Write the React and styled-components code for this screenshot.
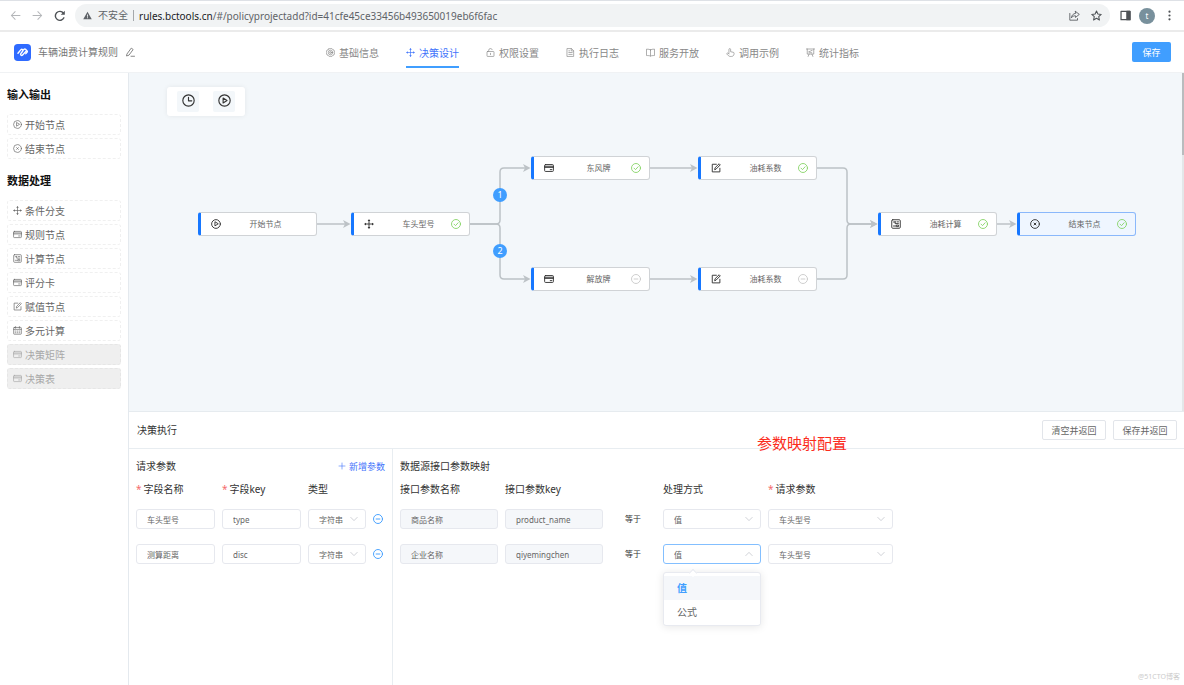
import React from "react";
import styled, { createGlobalStyle, css } from "styled-components";

const GlobalStyle = createGlobalStyle`
  * { box-sizing: border-box; }
  html, body { margin: 0; padding: 0; }
  body, button, input, select {
    font-family: "Noto Sans", "Noto Sans CJK SC", sans-serif;
  }
  body { background: #fff; color: #333; font-size: 10px; line-height: 16px; }
  button { margin: 0; padding: 0; border: 0; background: none; cursor: pointer; }
  h1, h2, h3, p, ul { margin: 0; padding: 0; font-weight: 400; }
`;

/* ---------- icons ---------- */

const Svg = styled.svg`
  display: block;
  flex: none;
  width: ${(p) => p.$size}px;
  height: ${(p) => p.$size}px;
  fill: none;
  stroke: currentColor;
  stroke-width: ${(p) => p.$weight || 1.2};
  stroke-linecap: round;
  stroke-linejoin: round;
`;

const shapes = {
  play: (
    <>
      <circle cx="8" cy="8" r="7" />
      <path d="M6.3 5v6l4.8-3z" />
    </>
  ),
  end: (
    <>
      <circle cx="8" cy="8" r="7" />
      <path d="M6.4 6.4l3.2 3.2M9.6 6.4L6.4 9.6" />
    </>
  ),
  branch: (
    <>
      <path d="M8 2v12M2 8h12" />
      <path d="M8 .2l2.200 3H5.800zM8 15.800l2.200-3H5.800zM.2 8l3-2.200v4.400zM15.800 8l-3-2.200v4.400z" fill="currentColor" stroke="none" />
    </>
  ),
  card: (
    <>
      <rect x="1" y="2.5" width="14" height="11" rx="1.4" />
      <path d="M1 5.2h14M1 7h14M10 10.6h2.6" />
    </>
  ),
  calc: (
    <>
      <rect x="1.2" y="1.2" width="13.6" height="13.6" rx="1.6" />
      <path d="M4 4.800h2.600M6.600 4v3.400h5.200M9.600 4.600h2.400M4 11.200h3.600M9.200 9.800h2.800v2.400H9.200z" />
    </>
  ),
  edit: (
    <>
      <path d="M8.600 2H2v12.200h12.200V8.400" />
      <path d="M6 10.200l.5-2.600L13 1.200l1.800 1.800-6.500 6.600z" />
    </>
  ),
  calendar: (
    <>
      <rect x="1.2" y="2.6" width="13.6" height="12" rx="1" />
      <path d="M1.2 6h13.6M4.6 1v3M11.4 1v3M4 9h1M7.5 9h1M11 9h1M4 12h1M7.5 12h1M11 12h1" />
    </>
  ),
  clock: (
    <>
      <circle cx="8" cy="8" r="7" />
      <path d="M8 4v4.4h4" />
    </>
  ),
  check: (
    <>
      <circle cx="8" cy="8" r="7.2" />
      <path d="M4.8 8.2l2.4 2.4 4.2-4.6" />
    </>
  ),
  minus: (
    <>
      <circle cx="8" cy="8" r="7.2" />
      <path d="M5 8h6" />
    </>
  ),
  gear: (
    <>
      <path d="M5.200 1.200h5.600L12 3l2.200.6L15.400 8l-1.200 4.400-2.200.6-1.200 1.800H5.200L4 13l-2.200-.6L.6 8l1.200-4.400L4 3z" />
      <circle cx="8" cy="8" r="4" />
      <circle cx="8" cy="8" r="1.6" />
    </>
  ),
  lock: (
    <>
      <rect x="1.8" y="6.2" width="12.4" height="8.8" rx="1" />
      <path d="M4.8 6V4a3.2 3.2 0 0 1 6.2-1M8 9.4v2.4" />
    </>
  ),
  doc: (
    <>
      <path d="M2.4 1h7.4l3.8 3.8V15H2.4z" />
      <path d="M9.4 1.2v4h4M5 8h6M5 11.4h6M5 5h1.6" />
    </>
  ),
  book: <path d="M8 3.2v11M8 3.2C6.8 2.4 4 2 .9 2v11.4c3 0 5.7.2 7.1 1 1.4-.8 4-1 7.1-1V2C12 2 9.2 2.4 8 3.2z" />,
  pointer: (
    <path d="M5.2 9.6V2.6a1.5 1.5 0 0 1 3 0v4l4.6 1a2 2 0 0 1 1.6 2.2c-.3 3-1.4 5.2-4.8 5.2H7.4C5 15 3.8 13 1.400 10.600c-.6-1.400 1.400-2 2.200-1.400l1.600 1.400" />
  ),
  board: (
    <path d="M.8 1.800h14.400M2.200 1.800v9h11.600v-9M5.400 11l-1.600 4M10.600 11l1.600 4M5.200 6.200h2.400l1-1.600h2.200M5.200 8.400h5" />
  ),
  pen: (
    <path d="M3.400 10.800L10 1.800l3 2.200-6.600 9-3.400 1.200zM9.600 14.800h5.600" />
  ),
  plus: <path d="M8 2v12M2 8h12" />,
  down: <path d="M1.600 4.800L8 11.200l6.400-6.400" />,
  up: <path d="M1.600 11.200L8 4.800l6.400 6.400" />,
  back: <path d="M14.500 8H2M7.500 2.500L2 8l5.500 5.500" />,
  forward: <path d="M1.500 8H14M8.500 2.500L14 8l-5.500 5.500" />,
  reload: (
    <>
      <path d="M13.2 10.4A6 6 0 1 1 12.6 4.2" />
      <path d="M14.4 1v5.4H9z" fill="currentColor" stroke="none" />
    </>
  ),
  warn: <path d="M8 1.2L15.6 14.6H.4zM7.2 6v4h1.6V6zm0 5.2v1.6h1.6v-1.6z" fill="currentColor" fillRule="evenodd" stroke="none" />,
  share: (
    <>
      <path d="M1.2 5v9.8h11.2v-2.4" />
      <path d="M9.400 2l5.600 4.400-5.600 4.400V8.400c-2.600 0-4.400.8-6 3 .4-3.400 2.400-6 6-6.600z" />
    </>
  ),
  star: <path d="M8 1.400l2 4.500 4.900.5-3.700 3.300 1.100 4.900L8 12.100l-4.300 2.500 1.100-4.900L1.100 6.400 6 5.900z" />,
  sidePanel: (
    <>
      <rect x="1.5" y="2" width="13" height="12" />
      <path d="M10 2h4.5v12H10z" fill="currentColor" />
    </>
  ),
  more: (
    <g fill="currentColor" stroke="none">
      <circle cx="8" cy="2.5" r="1.6" />
      <circle cx="8" cy="8" r="1.6" />
      <circle cx="8" cy="13.5" r="1.6" />
    </g>
  ),
};

const Icon = ({ name, size = 10, weight }) => (
  <Svg viewBox="0 0 16 16" $size={size} $weight={weight} aria-hidden="true">
    {shapes[name]}
  </Svg>
);

/* ---------- browser bar ---------- */

const Page = styled.div`
  display: flex;
  flex-direction: column;
  min-height: 100vh;
`;

const BrowserBar = styled.div`
  display: flex;
  align-items: center;
  height: 32px;
  padding: 0 8px 0 10px;
  border-top: 1px solid #dee1e6;
  border-bottom: 2px solid #ebebeb;
  color: #5f6368;
`;

const BarButton = styled.button`
  display: flex;
  justify-content: center;
  width: ${(p) => p.$width || 22}px;
  color: ${(p) => (p.$dim ? "#b4b6b9" : "#4f5357")};
`;

const AddressBar = styled.div`
  display: flex;
  flex: 1;
  align-items: center;
  height: 23px;
  margin: 0 4px 0 10px;
  padding: 0 3px 0 8px;
  border-radius: 12px;
  background: #f1f3f4;
`;

const Insecure = styled.span`
  margin-left: 6px;
  padding-right: 5px;
  border-right: 1px solid #a5a8ab;
  line-height: 11px;
`;

const Url = styled.p`
  flex: 1;
  margin-left: 5px;
  color: #5f6368;
  b { color: #202124; font-weight: 400; }
`;

const Avatar = styled.span`
  width: 16px;
  height: 16px;
  margin: 0 7px 0 3px;
  border-radius: 50%;
  background: #78909c;
  color: #fff;
  font-size: 8px;
  line-height: 15px;
  text-align: center;
`;

/* ---------- application header ---------- */

const Header = styled.header`
  display: grid;
  grid-template-columns: 1fr auto 1fr;
  align-items: center;
  height: 41px;
  padding: 0 13px 0 14px;
  border-bottom: 1px solid #f0f2f4;
`;

const Brand = styled.div`
  display: flex;
  align-items: center;
  gap: 7px;
  color: #777;
`;

const Logo = styled.svg`
  width: 17px;
  height: 17px;
`;

const BrandName = styled.h1`
  font-size: 10px;
  line-height: 16px;
`;

const IconButton = styled.button`
  display: flex;
  color: ${(p) => p.$color || "#777"};
`;

const Nav = styled.nav`
  display: flex;
  gap: 27px;
  height: 32px;
`;

const Tab = styled.a`
  display: flex;
  align-items: center;
  gap: 4px;
  padding-top: 3px;
  border-bottom: 2px solid ${(p) => (p.$active ? "#409eff" : "transparent")};
  color: ${(p) => (p.$active ? "#3f74fb" : "#888")};
  text-decoration: none;
`;

const SaveButton = styled.button`
  justify-self: end;
  width: 39px;
  height: 20px;
  border-radius: 2px;
  background: #409eff;
  color: #fff;
  font-size: 9px;
`;

/* ---------- body ---------- */

const Body = styled.div`
  display: flex;
  flex: 1;
`;

const Sidebar = styled.aside`
  flex: none;
  width: 129px;
  padding: 14px 7px;
  border-right: 1px solid #e4e9ee;
`;

const GroupTitle = styled.h2`
  margin-bottom: 11px;
  color: #111;
  font-size: 11px;
  font-weight: 700;
`;

const Palette = styled.ul`
  display: flex;
  flex-direction: column;
  gap: 3px;
  margin-bottom: 14px;
  list-style: none;
`;

const PaletteItem = styled.li`
  display: flex;
  align-items: center;
  gap: 3px;
  height: 21px;
  padding: 0 5px;
  border: 1px dashed #f0f0f0;
  border-radius: 3px;
  color: #666;
  ${(p) =>
    p.$disabled &&
    css`
      border-color: #e6e6e6;
      background: #efefef;
      color: #a8a8a8;
    `}
`;

const Main = styled.main`
  display: flex;
  flex: 1;
  flex-direction: column;
  min-width: 0;
`;

const Canvas = styled.section`
  position: relative;
  height: 338px;
  background: #f3f7fa;
`;

const ScrollThumb = styled.div`
  position: absolute;
  top: 0;
  right: 0;
  width: 2px;
  height: 100%;
  background: linear-gradient(#b9bcbe 82px, #e4e7e9 82px);
`;

const Toolbox = styled.div`
  position: absolute;
  top: 14px;
  left: 38px;
  display: flex;
  gap: 14px;
  padding: 4px 10px;
  border-radius: 3px;
  background: #fff;
  box-shadow: 0 0 5px rgba(0, 0, 0, 0.07);
`;

const Tool = styled.button`
  display: flex;
  justify-content: center;
  width: 22px;
  height: 21px;
  padding-top: 3px;
  border-radius: 2px;
  background: #f3f7fa;
  color: #333;
`;

const Edges = styled.svg`
  position: absolute;
  top: 0;
  left: 0;
  width: 100%;
  height: 100%;
  fill: none;
  stroke: #bcc2c6;
  stroke-width: 1.5;
`;

const NodeBox = styled.div`
  position: absolute;
  top: ${(p) => p.$y}px;
  left: ${(p) => p.$x}px;
  display: grid;
  grid-template-columns: 10px 1fr 10px;
  align-items: center;
  width: 119px;
  height: 24px;
  padding: 0 8px 0 10px;
  border: 1px solid ${(p) => (p.$selected ? "#8ab8fb" : "#d0d3d6")};
  border-left: 3px solid #1677ff;
  border-radius: 3px;
  background: ${(p) => (p.$selected ? "#eff6ff" : "#fff")};
  color: #333;
`;

const NodeLabel = styled.span`
  padding-left: 12px;
  color: #666;
  font-size: 8px;
  text-align: center;
`;

const Status = styled.span`
  color: ${(p) => (p.$ok ? "#85d465" : "#c8c8c8")};
`;

const Order = styled.span`
  position: absolute;
  top: ${(p) => p.$y}px;
  left: 364px;
  width: 14px;
  height: 14px;
  border-radius: 50%;
  background: #409eff;
  color: #fff;
  font-size: 9px;
  line-height: 14px;
  text-align: center;
`;

/* ---------- settings panel ---------- */

const Panel = styled.section`
  position: relative;
  display: flex;
  flex: 1;
  flex-direction: column;
  border-top: 1px solid #e6ebef;
`;

const PanelHead = styled.div`
  display: flex;
  align-items: center;
  gap: 7px;
  height: 37px;
  padding: 0 7px 0 8px;
  border-bottom: 1px solid #e8edf1;
`;

const PanelTitle = styled.h2`
  flex: 1;
  font-size: 10px;
`;

const PlainButton = styled.button`
  width: 64px;
  height: 20px;
  border: 1px solid #e2e5ea;
  border-radius: 2px;
  color: #666;
  font-size: 9px;
`;

const Note = styled.p`
  position: absolute;
  top: 19px;
  left: 628px;
  color: #fb2c1c;
  font-size: 15px;
  line-height: 24px;
`;

const Columns = styled.div`
  display: flex;
  flex: 1;
`;

const Column = styled.div`
  flex: ${(p) => (p.$grow ? "1" : "none")};
  width: ${(p) => (p.$grow ? "auto" : "264px")};
  padding: 9px 7px;
  border-right: ${(p) => (p.$grow ? "0" : "1px solid #e8edf1")};
`;

const ColumnHead = styled.div`
  display: flex;
  align-items: center;
  justify-content: space-between;
  height: 16px;
  margin-bottom: 7px;
`;

const ColumnTitle = styled.h3`
  font-size: 10px;
`;

const AddButton = styled.button`
  display: flex;
  align-items: center;
  gap: 3px;
  color: #3f74fb;
  font-size: 9px;
`;

const Row = styled.div`
  display: grid;
  grid-template-columns: ${(p) => (p.$mapping ? "98px 98px 46px 98px 125px" : "79px 79px 58px 10px")};
  align-items: center;
  column-gap: 7px;
  margin-bottom: ${(p) => (p.$head ? 12 : 15)}px;
`;

const FieldLabel = styled.span`
  grid-column: ${(p) => p.$col || "auto"};
  white-space: nowrap;
  ${(p) =>
    p.$required &&
    css`
      &::before {
        content: "*";
        margin-right: 2px;
        color: #f56c6c;
      }
    `}
`;

const control = css`
  width: 100%;
  height: 20px;
  padding: 0 10px;
  border: 1px solid ${(p) => (p.$open ? "#83bfff" : "#e6e8ee")};
  border-radius: 3px;
  background: #fff;
  color: #666;
  font-size: 8px;
  outline: 0;
`;

const TextInput = styled.input`
  ${control}
  &:disabled { background: #f5f7fa; }
`;

const SelectWrap = styled.div`
  position: relative;
  display: grid;
  align-items: center;
  justify-items: end;
  > * { grid-area: 1 / 1; }
  > svg { margin-right: 8px; color: #b0b4bc; pointer-events: none; }
`;

const NativeSelect = styled.select`
  ${control}
  appearance: none;
`;

const Equals = styled.span`
  font-size: 8px;
  text-align: center;
`;

const Menu = styled.div`
  position: absolute;
  z-index: 2;
  top: 28px;
  left: 0;
  width: 100%;
  padding: 3px 0 1px;
  border: 1px solid #e8eaf0;
  border-radius: 3px;
  background: #fff;
  box-shadow: 0 1px 8px rgba(0, 0, 0, 0.1);
  &::before {
    content: "";
    position: absolute;
    top: -3px;
    left: 26px;
    width: 5px;
    height: 5px;
    border: solid #e8eaf0;
    border-width: 1px 0 0 1px;
    background: #fff;
    transform: rotate(45deg);
  }
`;

const MenuItem = styled.div`
  height: 24px;
  padding: 0 13px;
  color: ${(p) => (p.$active ? "#409eff" : "#666")};
  background: ${(p) => (p.$active ? "#f5f7fa" : "#fff")};
  font-weight: ${(p) => (p.$active ? 700 : 400)};
  line-height: 24px;
`;

const Watermark = styled.p`
  position: absolute;
  right: 4px;
  bottom: 0;
  color: #ccc;
  font-size: 7px;
`;

/* ---------- data ---------- */

const tabs = [
  ["gear", "基础信息"],
  ["branch", "决策设计"],
  ["lock", "权限设置"],
  ["doc", "执行日志"],
  ["book", "服务开放"],
  ["pointer", "调用示例"],
  ["board", "统计指标"],
];

const groups = [
  { title: "输入输出", items: [["play", "开始节点"], ["end", "结束节点"]] },
  {
    title: "数据处理",
    items: [
      ["branch", "条件分支"],
      ["card", "规则节点"],
      ["calc", "计算节点"],
      ["card", "评分卡"],
      ["edit", "赋值节点"],
      ["calendar", "多元计算"],
      ["card", "决策矩阵", true],
      ["card", "决策表", true],
    ],
  },
];

const nodes = [
  { x: 69, y: 139, icon: "play", label: "开始节点" },
  { x: 222, y: 139, icon: "branch", label: "车头型号", status: "check" },
  { x: 402, y: 83, icon: "card", label: "东风牌", status: "check" },
  { x: 402, y: 194, icon: "card", label: "解放牌", status: "minus" },
  { x: 569, y: 83, icon: "edit", label: "油耗系数", status: "check" },
  { x: 569, y: 194, icon: "edit", label: "油耗系数", status: "minus" },
  { x: 749, y: 139, icon: "calc", label: "油耗计算", status: "check" },
  { x: 888, y: 139, icon: "end", label: "结束节点", status: "check", selected: true },
];

const edges = [
  "M188 151H219",
  "M341 151H367Q371 151 371 147V99Q371 95 375 95H399",
  "M341 151H367Q371 151 371 155V202Q371 206 375 206H399",
  "M521 95H566",
  "M521 206H566",
  "M688 95H714Q718 95 718 99V147Q718 151 722 151H746",
  "M688 206H714Q718 206 718 202V155Q718 151 722 151H746",
  "M868 151H885",
];

const requestParams = [
  ["车头型号", "type"],
  ["测算距离", "disc"],
];

const mappings = [
  { name: "商品名称", key: "product_name" },
  { name: "企业名称", key: "qiyemingchen", open: true },
];

const Select = ({ options, label, open, children }) => (
  <SelectWrap>
    <NativeSelect aria-label={label} $open={open}>
      {options.map((o) => (
        <option key={o}>{o}</option>
      ))}
    </NativeSelect>
    <Icon name={open ? "up" : "down"} size={8} />
    {children}
  </SelectWrap>
);

export default function App() {
  return (
    <Page>
      <GlobalStyle />
      <BrowserBar>
        <BarButton $dim $width={11} aria-label="后退"><Icon name="back" size={11} weight={1.5} /></BarButton>
        <BarButton $dim $width={33} aria-label="前进"><Icon name="forward" size={11} weight={1.5} /></BarButton>
        <BarButton $width={11} aria-label="刷新"><Icon name="reload" size={12} weight={1.9} /></BarButton>
        <AddressBar>
          <Icon name="warn" size={9} />
          <Insecure>不安全</Insecure>
          <Url><b>rules.bctools.cn</b>/#/policyprojectadd?id=41cfe45ce33456b493650019eb6f6fac</Url>
          <BarButton aria-label="分享"><Icon name="share" size={11} /></BarButton>
          <BarButton aria-label="收藏"><Icon name="star" size={11} weight={1.5} /></BarButton>
        </AddressBar>
        <BarButton aria-label="侧边栏"><Icon name="sidePanel" size={11} weight={1.8} /></BarButton>
        <Avatar>t</Avatar>
        <BarButton $width={14} aria-label="更多"><Icon name="more" size={11} /></BarButton>
      </BrowserBar>

      <Header>
        <Brand>
          <Logo viewBox="0 0 18 18" aria-hidden="true">
            <rect width="18" height="18" rx="4" fill="#2f6bff" />
            <path
              d="M4.200 9.800L7.400 6q.9-.8 1.700 0 .7.8 0 1.700L7.200 10.200q-.6 1 .2 1.700.9.600 1.700-.3L12.600 7.800M9.800 6.400l.9-.9q.8-.6 1.500.1l1.700 1.700q.6.800-.1 1.500l-1.300 1.400"
              fill="none"
              stroke="#fff"
              strokeWidth="1.5"
              strokeLinecap="round"
              strokeLinejoin="round"
            />
          </Logo>
          <BrandName>车辆油费计算规则</BrandName>
          <IconButton aria-label="编辑名称"><Icon name="pen" size={10} weight={1.4} /></IconButton>
        </Brand>
        <Nav>
          {tabs.map(([icon, label]) => (
            <Tab key={label} href="#" $active={label === "决策设计"}>
              <Icon name={icon} size={9} />
              {label}
            </Tab>
          ))}
        </Nav>
        <SaveButton>保存</SaveButton>
      </Header>

      <Body>
        <Sidebar>
          {groups.map((g) => (
            <React.Fragment key={g.title}>
              <GroupTitle>{g.title}</GroupTitle>
              <Palette>
                {g.items.map(([icon, label, disabled]) => (
                  <PaletteItem key={label} $disabled={disabled}>
                    <Icon name={icon} size={9} />
                    {label}
                  </PaletteItem>
                ))}
              </Palette>
            </React.Fragment>
          ))}
        </Sidebar>

        <Main>
          <Canvas>
            <Edges aria-hidden="true">
              <defs>
                <marker id="arrow" markerUnits="userSpaceOnUse" markerWidth="8" markerHeight="8" refX="5" refY="4" orient="auto">
                  <path d="M0 0L7.5 4L0 8L2 4z" fill="#bcc2c6" stroke="none" />
                </marker>
              </defs>
              {edges.map((d) => (
                <path key={d} d={d} markerEnd="url(#arrow)" />
              ))}
            </Edges>
            {nodes.map((n) => (
              <NodeBox key={`${n.x}-${n.y}`} $x={n.x} $y={n.y} $selected={n.selected}>
                <Icon name={n.icon} size={10} weight={1.5} />
                <NodeLabel>{n.label}</NodeLabel>
                {n.status && (
                  <Status $ok={n.status === "check"}>
                    <Icon name={n.status} size={10} weight={1.4} />
                  </Status>
                )}
              </NodeBox>
            ))}
            <Order $y={115}>1</Order>
            <Order $y={171}>2</Order>
            <Toolbox>
              <Tool aria-label="历史"><Icon name="clock" size={13} weight={1.4} /></Tool>
              <Tool aria-label="运行"><Icon name="play" size={13} weight={1.4} /></Tool>
            </Toolbox>
            <ScrollThumb />
          </Canvas>

          <Panel>
            <PanelHead>
              <PanelTitle>决策执行</PanelTitle>
              <PlainButton>清空并返回</PlainButton>
              <PlainButton>保存并返回</PlainButton>
            </PanelHead>
            <Note>参数映射配置</Note>
            <Columns>
              <Column>
                <ColumnHead>
                  <ColumnTitle>请求参数</ColumnTitle>
                  <AddButton><Icon name="plus" size={8} />新增参数</AddButton>
                </ColumnHead>
                <Row $head>
                  <FieldLabel $required>字段名称</FieldLabel>
                  <FieldLabel $required>字段key</FieldLabel>
                  <FieldLabel>类型</FieldLabel>
                </Row>
                {requestParams.map(([name, key]) => (
                  <Row key={key}>
                    <TextInput aria-label="字段名称" defaultValue={name} />
                    <TextInput aria-label="字段key" defaultValue={key} />
                    <Select label="类型" options={["字符串"]} />
                    <IconButton $color="#409eff" aria-label="删除参数"><Icon name="minus" size={10} weight={1.5} /></IconButton>
                  </Row>
                ))}
              </Column>
              <Column $grow>
                <ColumnHead>
                  <ColumnTitle>数据源接口参数映射</ColumnTitle>
                </ColumnHead>
                <Row $head $mapping>
                  <FieldLabel>接口参数名称</FieldLabel>
                  <FieldLabel>接口参数key</FieldLabel>
                  <FieldLabel $col={4}>处理方式</FieldLabel>
                  <FieldLabel $required>请求参数</FieldLabel>
                </Row>
                {mappings.map((m) => (
                  <Row key={m.key} $mapping>
                    <TextInput aria-label="接口参数名称" disabled defaultValue={m.name} />
                    <TextInput aria-label="接口参数key" disabled defaultValue={m.key} />
                    <Equals>等于</Equals>
                    <Select label="处理方式" options={["值", "公式"]} open={m.open}>
                      {m.open && (
                        <Menu>
                          <MenuItem $active>值</MenuItem>
                          <MenuItem>公式</MenuItem>
                        </Menu>
                      )}
                    </Select>
                    <Select label="请求参数" options={["车头型号", "测算距离"]} />
                  </Row>
                ))}
              </Column>
            </Columns>
            <Watermark>@51CTO博客</Watermark>
          </Panel>
        </Main>
      </Body>
    </Page>
  );
}
